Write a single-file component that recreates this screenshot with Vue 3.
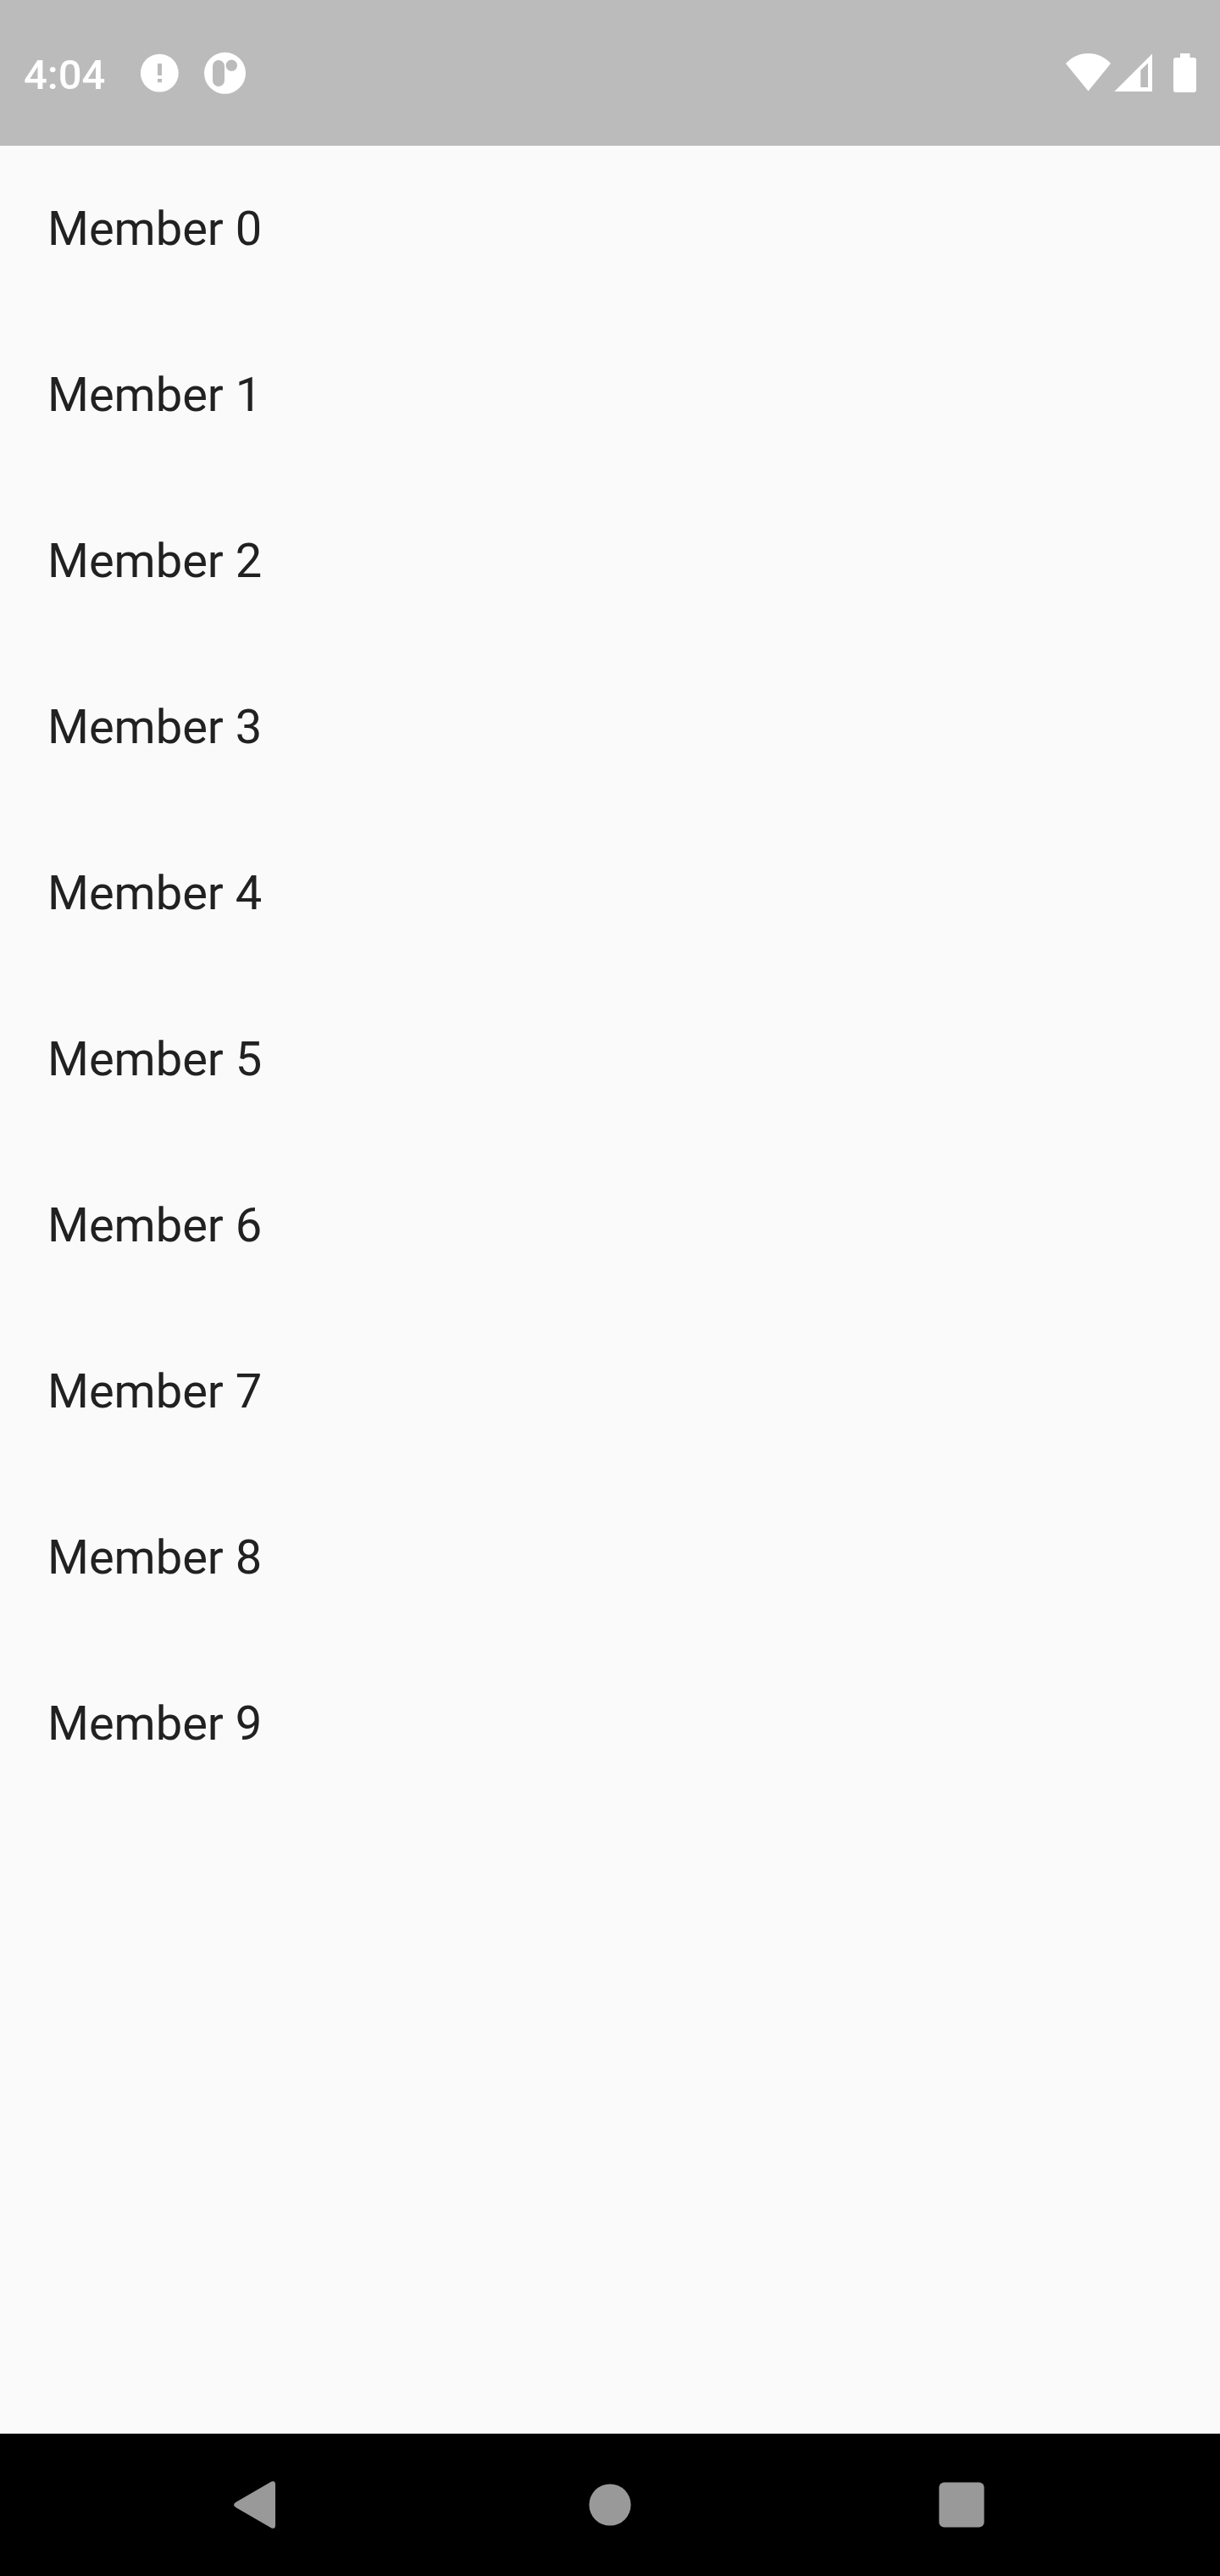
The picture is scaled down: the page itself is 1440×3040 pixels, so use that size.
<script setup>
const members = Array.from({ length: 10 }, (_, i) => `Member ${i}`)
</script>

<template>
  <div class="screen">
    <header class="status">
      <div class="group">
        <time class="clock">4:04</time>
        <svg class="icon" viewBox="0 0 56 56" aria-hidden="true">
          <path fill-rule="evenodd" d="M28.3 5.8a22.4 22.4 0 1 1 0 44.8a22.4 22.4 0 1 1 0-44.8zM26 17v14h5V17zM26 35v4.300h5V35z" />
        </svg>
        <svg class="icon" viewBox="0 0 56 56" aria-hidden="true">
          <path fill-rule="evenodd" d="M28.500 3.800a24.500 24.500 0 1 1 0 49a24.500 24.500 0 1 1 0-49zM14 20v17a7 7 0 0 0 14 0V20a7 7 0 0 0-14 0zM36.300 12.600a6.700 6.700 0 1 0 0 13.400a6.700 6.700 0 1 0 0-13.400z" />
        </svg>
      </div>
      <div class="group right">
        <svg class="icon" viewBox="0 0 56 56" aria-hidden="true">
          <path d="M28.500 49.500L2 17C8.500 9.500 18 5 28.500 5S48.500 9.500 55 17z" />
        </svg>
        <svg class="icon" viewBox="0 0 56 56" aria-hidden="true">
          <path fill-rule="evenodd" d="M3.300 50L48 5.500V50zM34.300 24.800V45H43V16.500z" />
        </svg>
        <svg class="icon" viewBox="0 0 56 56" aria-hidden="true">
          <path d="M25 5h11.500v5H41a3 3 0 0 1 3 3v35a3 3 0 0 1-3 3H20a3 3 0 0 1-3-3V13a3 3 0 0 1 3-3h5z" />
        </svg>
      </div>
    </header>

    <main class="content">
      <ul class="list">
        <li v-for="member in members" :key="member" class="row">{{ member }}</li>
      </ul>
    </main>

    <nav class="navbar" aria-label="System navigation">
      <button type="button" class="key" aria-label="Back">
        <svg class="glyph" viewBox="0 0 84 84" aria-hidden="true">
          <path d="M15.200 39L57.500 14.600Q62 12.800 62 18V66Q62 71.200 57.500 69.400L15.200 45Q10.800 42 15.200 39z" />
        </svg>
      </button>
      <button type="button" class="key" aria-label="Home">
        <svg class="glyph" viewBox="0 0 84 84" aria-hidden="true">
          <circle cx="42" cy="42" r="24.6" />
        </svg>
      </button>
      <button type="button" class="key" aria-label="Recent apps">
        <svg class="glyph" viewBox="0 0 84 84" aria-hidden="true">
          <rect x="15.400" y="15.400" width="53.200" height="53.200" rx="6" />
        </svg>
      </button>
    </nav>
  </div>
</template>

<style>
body {
  margin: 0;
}
</style>

<style scoped>
.screen {
  display: flex;
  flex-direction: column;
  min-height: 100vh;
  background: #fafafa;
  color: #212121;
  font-family: Roboto, "Noto Sans", sans-serif;
}

.status {
  display: flex;
  align-items: center;
  justify-content: space-between;
  height: 172px;
  padding: 0 16px 0 28px;
  box-sizing: border-box;
  background: #bbbbbb;
  color: #ffffff;
}

.group {
  display: flex;
  align-items: center;
  gap: 21px;
}

.group.right {
  gap: 0;
}

.clock {
  margin-right: 15px;
  padding-top: 6px;
  font-size: 49px;
  font-weight: 500;
  line-height: 56px;
}

.icon {
  display: block;
  width: 56px;
  height: 56px;
  fill: currentColor;
}

.content {
  flex: 1;
}

.list {
  margin: 0;
  padding: 0;
  list-style: none;
}

.row {
  padding: 0 56px;
  font-size: 56px;
  line-height: 196px;
}

.navbar {
  display: flex;
  height: 168px;
  padding: 0 97px;
  background: #000000;
}

.key {
  display: flex;
  flex: 1;
  align-items: center;
  justify-content: center;
  padding: 0;
  border: 0;
  background: none;
  color: #999999;
}

.glyph {
  display: block;
  width: 84px;
  height: 84px;
  fill: currentColor;
}
</style>
